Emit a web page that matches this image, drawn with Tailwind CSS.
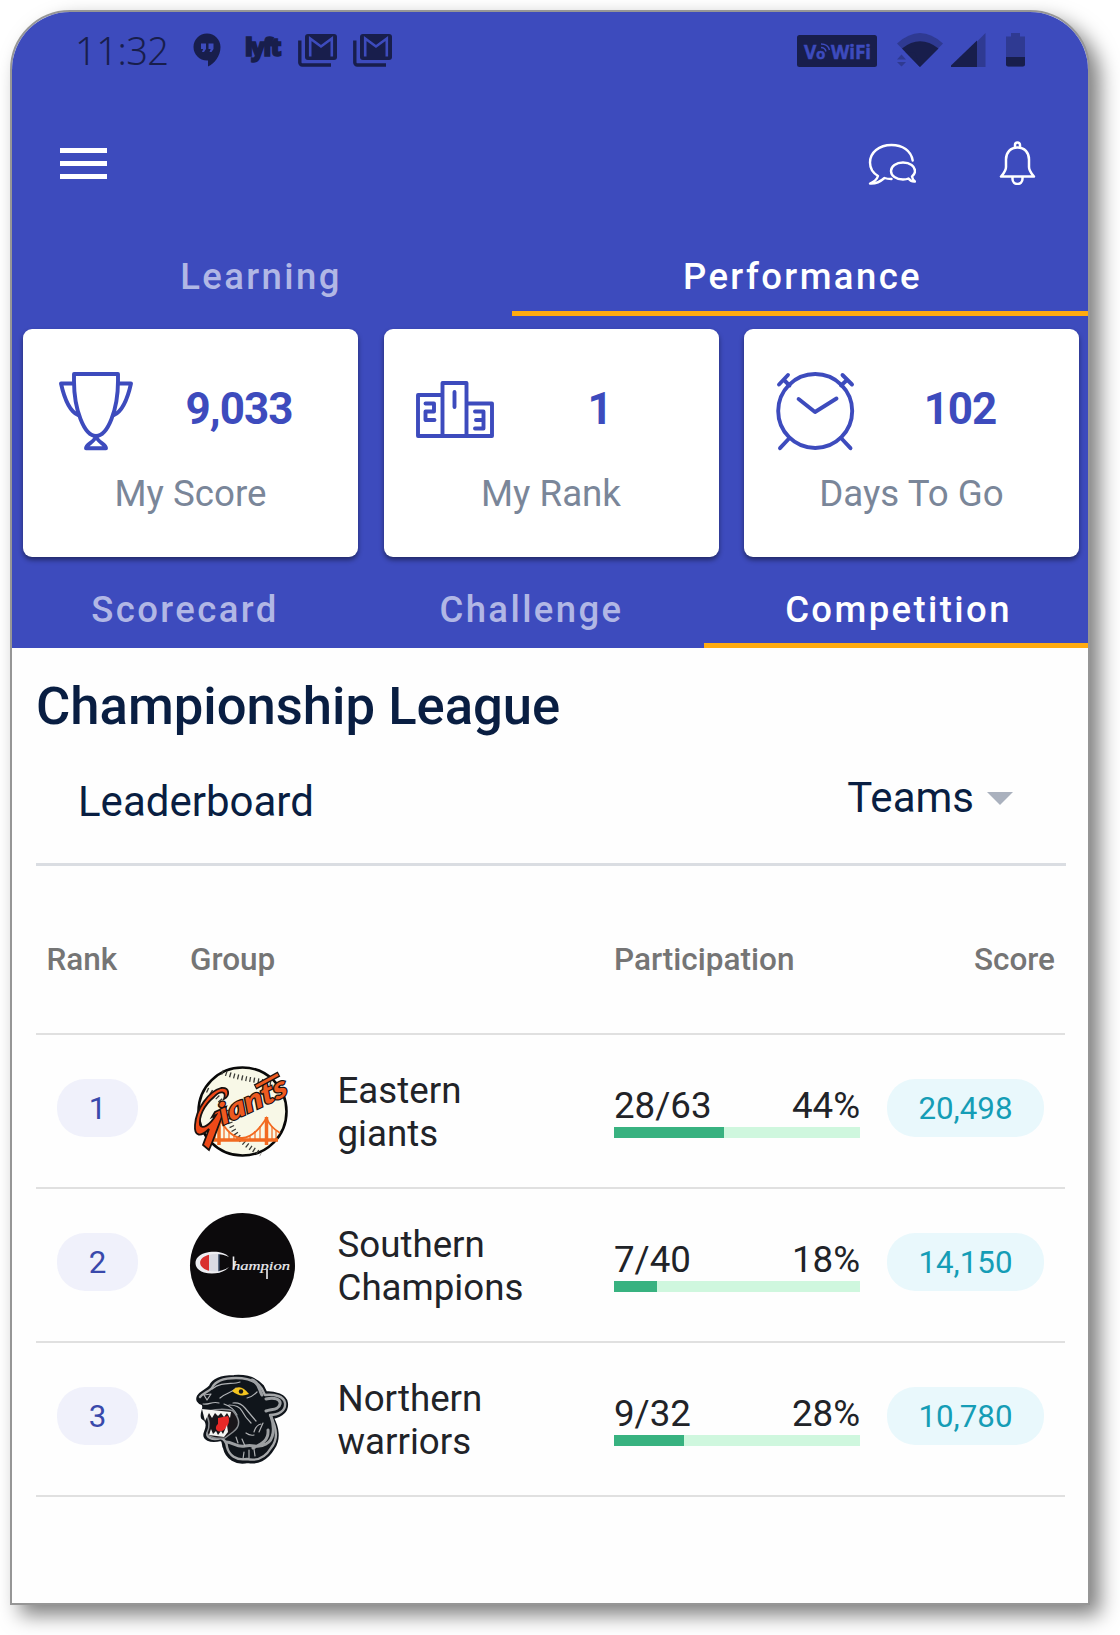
<!DOCTYPE html>
<html lang="en">
<head>
<meta charset="utf-8">
<title>Championship League</title>
<script src="https://cdn.jsdelivr.net/npm/@tailwindcss/browser@4"></script>
</head>
<body class="bg-white h-[1635px] overflow-hidden font-['Roboto',sans-serif]">
<div class="ml-[10px] mt-[10px] w-[1080px] h-[1595px] overflow-hidden rounded-t-[60px] border-2 border-[#969696] bg-[#fefefe] shadow-[10px_10px_20px_rgba(0,0,0,0.5)]">

  <header class="bg-[#3d4bbd] h-[636px]">
    <!-- Status bar -->
    <div class="flex h-[76px] items-center pl-[63px] pr-[63px] text-[#181e4c]">
      <div class="w-[118px] whitespace-nowrap font-['Noto_Sans'] text-[38px] font-light leading-[40px] tracking-[-0.500px]">11:32</div>
      <svg class="h-[34px] w-[28px]" viewBox="0 0 28 34" fill="none"><path d="M14 .5C6.500.5.5 6.500.5 14s6 13.500 13.500 13.500h1V33.500C21.500 30.500 27.500 23 27.500 14 27.500 6.500 21.500.5 14 .5Z" fill="currentColor"/><path d="M8 10.500h5v5.500l-2 3H9l1.200-3H8zM15.500 10.500h5v5.500l-2 3h-2l1.200-3h-2.200z" fill="#3d4bbd"/></svg>
      <div class="ml-[24px] mt-[-7px] w-[37px] whitespace-nowrap font-['Open_Sans'] text-[24px] font-extrabold leading-[30px] tracking-[-2.300px] [-webkit-text-stroke:1.500px_#181e4c]">lyft</div>
      <svg class="ml-[16px] h-[34px] w-[39px]" viewBox="0 0 39 34" fill="none"><path d="M1.800 7.500V29.500a2.500 2.500 0 0 0 2.500 2.500H33" stroke="currentColor" stroke-width="3.400"/><rect x="7" y="1" width="32" height="26" rx="3" fill="currentColor"/><path d="M12.200 23.500V5.500L23 13.500 33.800 5.500V23.500" stroke="#3d4bbd" stroke-width="2.600"/></svg>
      <svg class="ml-[16px] h-[34px] w-[39px]" viewBox="0 0 39 34" fill="none"><path d="M1.800 7.500V29.500a2.500 2.500 0 0 0 2.500 2.500H33" stroke="currentColor" stroke-width="3.400"/><rect x="7" y="1" width="32" height="26" rx="3" fill="currentColor"/><path d="M12.200 23.500V5.500L23 13.500 33.800 5.500V23.500" stroke="#3d4bbd" stroke-width="2.600"/></svg>
      <svg class="ml-auto h-[34px] w-[80px]" viewBox="0 0 80 34"><rect y="2" width="80" height="32" rx="2.500" fill="currentColor"/><g fill="#3d4bbd" stroke="#3d4bbd" stroke-width=".5" font-family="Noto Sans" font-weight="700"><text x="7" y="25.500" font-size="19">V</text><text x="19" y="25.500" font-size="15">o</text><text x="34" y="25.500" font-size="19" textLength="40" lengthAdjust="spacingAndGlyphs">WiFi</text></g><path d="M24 14.500q4 0 5 4M24 11q7 0 8.500 6" fill="none" stroke="#3d4bbd" stroke-width="1.500"/></svg>
      <svg class="ml-[20px] h-[34px] w-[46px]" viewBox="0 0 46 34"><path d="M0 10.500Q23-10.500 46 10.500L23 34Z" fill="#2f3a92"/><path d="M5 15.500Q23 1 41.500 15.500L23 34Z" fill="currentColor"/><path d="M-1 19.500V34H16L8 19.500Z" fill="#3d4bbd"/><path d="M0 26.500 4.500 21.500 9 26.500ZM0 29 4.500 33.500 9 29Z" fill="#2f3a92"/><path d="M8.500 19 23 34 18 20Z" fill="currentColor"/></svg>
      <svg class="ml-[8px] h-[34px] w-[35px]" viewBox="0 0 35 34"><path d="M34.500 0V34H1Z" fill="#2f3a92"/><path d="M26 7.500V34H0V32.500Z" fill="currentColor"/></svg>
      <svg class="ml-[20px] h-[34px] w-[19px]" viewBox="0 0 19 34"><path d="M5 0h9v3.500h5V30.500a3 3 0 0 1-3 3H3a3 3 0 0 1-3-3V3.500h5Z" fill="#2f3a92"/><path d="M0 24H19V31.500a2 2 0 0 1-2 2H2a2 2 0 0 1-2-2Z" fill="currentColor"/></svg>
    </div>

    <!-- App bar -->
    <div class="flex h-[149px] items-center pl-[48px] pr-[52px] text-white">
      <div class="mt-[2px] flex w-[47px] flex-col gap-[7.500px]">
        <div class="h-[5.500px] bg-white"></div><div class="h-[5.500px] bg-white"></div><div class="h-[5.500px] bg-white"></div>
      </div>
      <svg class="ml-auto mt-[2px] h-[44px] w-[48px]" viewBox="0 0 48 44" fill="none" stroke="currentColor" stroke-width="2.400" stroke-linecap="round" stroke-linejoin="round"><path d="M44.700 18.500C43 8.500 34.500 3 23.500 3 11 3 2 10.500 2 20.500c0 5.500 3 10.500 8 13.500C9 37.500 5.500 40 2 41.500c5.500.5 11-2.500 14.500-5.500 2 .8 4.500 1 7 1"/><path d="M35 20.500C28 20.500 23 24.200 23 29s5 8.500 12 8.500c2 0 4-.3 5.500-1C42 38.500 44.500 39.700 47 39.500c-1.500-1-2.500-2.500-3-5C46 33 47 31 47 29c0-4.800-5-8.500-12-8.500Z"/></svg>
      <svg class="ml-[83px] h-[44px] w-[37px]" viewBox="0 0 37 44" fill="none" stroke="currentColor" stroke-width="2.500" stroke-linejoin="round"><path d="M18.500 6.500C11.500 6.500 7 11.500 7 18.500V26c0 4-2 6-5 9.500H35C32 32 30 30 30 26V18.500C30 11.500 25.500 6.500 18.500 6.500Z"/><path d="M16 6.500V4a2.500 2.500 0 0 1 5 0V6.500M13.500 35.500V38a5 5 0 0 0 10 0V35.500"/></svg>
    </div>

    <!-- Main tabs -->
    <nav class="flex h-[79px] text-[36.500px] font-medium tracking-[2.400px]">
      <div class="flex w-[500px] items-center justify-center pr-[2px] pt-[2px] text-[#b1b7e5]">Learning</div>
      <div class="relative flex flex-1 items-center justify-center pl-[5px] pt-[2px] text-white">Performance
        <div class="absolute inset-x-0 bottom-0 h-[5.400px] bg-[#ffab10]"></div>
      </div>
    </nav>

    <!-- Summary cards -->
    <div class="grid grid-cols-3 gap-[25.500px] pl-[11px] pr-[9px] pt-[13px]">
      <div class="h-[228px] rounded-[9px] bg-white pt-[42px] shadow-[0_3px_5px_rgba(0,0,0,0.45)]">
        <div class="flex h-[80px] items-center pl-[31px] pr-[14px]">
          <svg class="size-[80px] shrink-0" viewBox="0 0 80 80" fill="none" stroke="#3d4bbd" stroke-width="3.900" stroke-linecap="round" stroke-linejoin="round"><path d="M20 3H64V10C64 38 54 65 42 65S20 38 20 10Z"/><path d="M20 12.500H7C10 26 15 40 24 44M64 12.500H77C74 26 69 40 60 44"/><path d="M42 65C41 71 32 73 32 77.200H52C52 73 43 71 42 65Z"/></svg>
          <div class="flex-1 pb-[4px] text-center text-[44px] font-bold leading-[50px] tracking-[-1px] text-[#3d4bbd]">9,033</div>
        </div>
        <div class="mt-[20px] text-center text-[36.700px] leading-[46px] text-[#7a8699]">My Score</div>
      </div>
      <div class="h-[228px] rounded-[9px] bg-white pt-[42px] shadow-[0_3px_5px_rgba(0,0,0,0.45)]">
        <div class="flex h-[80px] items-center pl-[31px] pr-[14px]">
          <svg class="size-[80px] shrink-0" viewBox="0 0 80 80" fill="none" stroke="#3d4bbd" stroke-width="3.900" stroke-linecap="round" stroke-linejoin="round"><path d="M3 24H27.500V12H51.500V32.500H77V65H3ZM27.500 24V65M51.500 32V65"/><path d="M10.500 32.500H19V40.500H10.500V49H19.500M39.500 21V36M60 40.500H68.500V57.500H60M61 49H68.500"/></svg>
          <div class="flex-1 pb-[4px] text-center text-[44px] font-bold leading-[50px] tracking-[-1px] text-[#3d4bbd]">1</div>
        </div>
        <div class="mt-[20px] text-center text-[36.700px] leading-[46px] text-[#7a8699]">My Rank</div>
      </div>
      <div class="h-[228px] rounded-[9px] bg-white pt-[42px] shadow-[0_3px_5px_rgba(0,0,0,0.45)]">
        <div class="flex h-[80px] items-center pl-[31px] pr-[14px]">
          <svg class="size-[80px] shrink-0" viewBox="0 0 80 80" fill="none" stroke="#3d4bbd" stroke-width="3.900" stroke-linecap="round" stroke-linejoin="round"><circle cx="40.200" cy="40" r="37"/><path d="M23.600 28 40 41 61.500 27.500M4 13.500 13 4M9 9 14.500 14.500M67.500 4 77 13.500M72 9 66 14.500M14.500 67 5 77.200M66 67 75.500 77.200"/></svg>
          <div class="flex-1 pb-[4px] text-center text-[44px] font-bold leading-[50px] tracking-[-1px] text-[#3d4bbd]">102</div>
        </div>
        <div class="mt-[20px] text-center text-[36.700px] leading-[46px] text-[#7a8699]">Days To Go</div>
      </div>
    </div>

    <!-- Secondary tabs -->
    <nav class="mt-[14px] flex h-[77px] text-[36.500px] font-medium tracking-[2.400px] text-[#b1b7e5]">
      <div class="flex w-[346px] items-center justify-center pt-[2px]">Scorecard</div>
      <div class="flex w-[346px] items-center justify-center pl-[1px] pt-[2px]">Challenge</div>
      <div class="relative flex flex-1 items-center justify-center pl-[5px] pt-[2px] text-white">Competition
        <div class="absolute inset-x-0 bottom-0 h-[5.400px] bg-[#ffab10]"></div>
      </div>
    </nav>
  </header>

  <main class="pl-[24px] text-[#091e42]">
    <h1 class="pt-[28px] text-[52.600px] font-medium leading-[60px]">Championship League</h1>
    <div class="flex h-[130px] w-[1030px] items-start justify-between border-b-[3px] border-[#dadde2] pl-[42px] pr-[53px] text-[42px] leading-[50px]">
      <div class="pt-[41px]">Leaderboard</div>
      <div class="flex items-center gap-[13px] pt-[37px]">Teams
        <svg class="h-[13px] w-[26px]" viewBox="0 0 26 13"><path d="M0 0H26L13 13Z" fill="#aab1be"/></svg>
      </div>
    </div>

    <!-- Leaderboard table -->
    <div class="w-[1029px] text-[36.700px] text-[#212328]">
      <div class="grid h-[169px] grid-cols-[154px_424px_273px_1fr] border-b-2 border-[#e0e0e0] pt-[74px] text-[31.500px] font-medium leading-[40px] text-[#757575]">
        <div class="pl-[10.500px]">Rank</div><div>Group</div><div>Participation</div><div class="pr-[10px] text-right">Score</div>
      </div>

      <div class="grid h-[154px] grid-cols-[154px_147.500px_276.500px_246px_1fr] border-b-2 border-[#e0e0e0]">
        <div class="pl-[21px] pt-[44px]"><div class="h-[58px] w-[81px] rounded-[28px] bg-[#f0f1fb] text-center text-[31.300px] leading-[59px] text-[#3949ab]">1</div></div>
        <svg class="mt-[24px] size-[105px] overflow-visible" viewBox="0 0 105 105">
          <circle cx="52.500" cy="52.500" r="44" fill="#f8f8e7" stroke="#080808" stroke-width="2.600"/>
          <path d="M32 13Q50 20 84 24M17 31Q33 38 39 60T71 95" fill="none" stroke="#3a3a36" stroke-width="5" stroke-dasharray="1.300 2.800"/>
          <g fill="none" stroke="#f26a21"><path d="M23 81H88" stroke-width="3.500"/><path d="M29 58V86M76.500 58V86" stroke-width="3.500"/><path d="M29 59Q40 79 52 79T76.500 59Q80 68 90 74" stroke-width="1.800"/><path d="M34 66V81M39 73V81M44 77V81M60 77V81M65 72V81M70 67V81M82 67V81M86 72V81M25 66V81" stroke-width="1.200"/></g>
          <path d="M34 40C37 32 30 31 24 38C13 47 9 58 10 66C12 71 20 66 26 56L22 58 25 53 36 48C29 64 26 75 19 91L13 86 19 70C11 78 4 78 5 66C6 50 19 32 31 29C40 28 40 37 34 40Z" fill="#ee4918" stroke="#1a1210" stroke-width="1.800"/>
          <text transform="translate(33 66) rotate(-25) skewX(-6)" font-family="Lato" font-size="29" font-weight="900" font-style="italic" textLength="73" lengthAdjust="spacingAndGlyphs" fill="#ee5a20" stroke="#1a1210" stroke-width="2.400" paint-order="stroke">iants</text>
          <path d="M65 28 89 15" stroke="#1a1210" stroke-width="5.500"/><path d="M66 27.500 88 15.500" stroke="#ee5a20" stroke-width="3"/>
        </svg>
        <div class="pt-[34px] leading-[43px]">Eastern<br>giants</div>
        <div class="pt-[49px]">
          <div class="flex h-[43px] justify-between leading-[43px]"><span>28/63</span><span>44%</span></div>
          <div class="h-[11px] bg-[#cff7de]"><div class="h-full bg-[#38b280]" style="width:44.700%"></div></div>
        </div>
        <div class="pl-[27px] pt-[44px]"><div class="h-[58px] w-[157px] rounded-[28px] bg-[#e9f8fc] text-center text-[31.300px] leading-[59px] text-[#159db6]">20,498</div></div>
      </div>

      <div class="grid h-[154px] grid-cols-[154px_147.500px_276.500px_246px_1fr] border-b-2 border-[#e0e0e0]">
        <div class="pl-[21px] pt-[44px]"><div class="h-[58px] w-[81px] rounded-[28px] bg-[#f0f1fb] text-center text-[31.300px] leading-[59px] text-[#3949ab]">2</div></div>
        <svg class="mt-[24px] size-[105px] overflow-visible" viewBox="0 0 105 105">
          <circle cx="52.500" cy="52.500" r="52.500" fill="#0c0a0c"/>
          <path d="M19 41V59C12 58 9 54 9 50S12 42 19 41Z" fill="#d9302f"/><path d="M19 40.500H29V60H19Z" fill="#d9dae3"/><path d="M29 41V60" stroke="#344964" stroke-width="1.500"/>
          <path d="M39 44C34 38 22 38 15 40C2 44 3 56 14 59.500C23 62 34 60 39 54C33 58 25 60 18 57.500C7 54 8 45 18 42C26 40 33 41 39 44Z" fill="#eeeef2"/>
          <text x="42" y="57" font-family="Liberation Serif" font-size="13" font-style="italic" textLength="58" lengthAdjust="spacingAndGlyphs" fill="#eeeef2" stroke="#eeeef2" stroke-width=".2">hampion</text>
          <path d="M77 56V66M43.500 43.500V56" stroke="#eeeef2" stroke-width="1.600"/>
        </svg>
        <div class="pt-[34px] leading-[43px]">Southern<br>Champions</div>
        <div class="pt-[49px]">
          <div class="flex h-[43px] justify-between leading-[43px]"><span>7/40</span><span>18%</span></div>
          <div class="h-[11px] bg-[#cff7de]"><div class="h-full bg-[#38b280]" style="width:17.600%"></div></div>
        </div>
        <div class="pl-[27px] pt-[44px]"><div class="h-[58px] w-[157px] rounded-[28px] bg-[#e9f8fc] text-center text-[31.300px] leading-[59px] text-[#159db6]">14,150</div></div>
      </div>

      <div class="grid h-[154px] grid-cols-[154px_147.500px_276.500px_246px_1fr] border-b-2 border-[#e0e0e0]">
        <div class="pl-[21px] pt-[44px]"><div class="h-[58px] w-[81px] rounded-[28px] bg-[#f0f1fb] text-center text-[31.300px] leading-[59px] text-[#3949ab]">3</div></div>
        <svg class="mt-[24px] size-[105px]" viewBox="0 0 105 105" fill="none" stroke-linejoin="round" stroke-linecap="round">
          <path d="M8 29C11 24 17 23 20 19C23 12 33 9 44 9C56 8 66 11 73 19L76 25C85 25 96 28 97 36C98 45 91 49 83 51C88 60 90 72 84 81C77 93 67 97 58 95C46 98 36 91 34 81C32 78 34 75 31 73C20 76 12 72 15 65C18 58 16 53 12 51C10 45 16 40 12 37C8 36 6 33 8 29Z" fill="#10151b" stroke="#10151b" stroke-width="2"/>
          <path d="M10 30C13 26 18 25 22 21C26 12 37 11 46 11C58 11 67 14 72 22L75 28C84 27 94 29 95 36C96 44 88 48 80 48C87 61 88 73 81 81C75 91 66 94 57 92C46 94 39 88 37 80C37 76 34 72 31 71C22 74 15 70 18 65" stroke="#a6a8aa" stroke-width="2.400"/>
          <path d="M81 49C85 61 84 73 76 77C68 82 64 77 55 79C47 81 43 75 36 75M63 81C71 77 79 74 78 63M62 13C70 16 69 24 72 28M76 32C84 30 91 32 90 37C89 43 82 42 76 44" stroke="#9c9fa2" stroke-width="3"/>
          <path d="M22 22C32 14 42 18 50 15M30 31C37 25 42 26 46 21M13 37C19 38 22 34 29 36M14 28L21 27 17 33ZM43 36Q50 35 55 41T66 54M39 38Q49 38 52 44T61 56M34 37Q43 40 47 48M57 31Q62 30 67 25M64 65Q66 58 71 57M69 65L73 56M56 66Q60 69 64 68M52 72L55 79M46 70L48 76M54 85L53 92M59 83V91M64 82L65 89" stroke="#b0b2b5" stroke-width="1.200"/>
          <path d="M15 46C22 41 39 42 43 44C50 52 51 59 43 65L35 71C28 72 19 71 17 66C20 60 20 52 15 46Z" fill="#19161a" stroke="#898c90" stroke-width="1.500"/>
          <path d="M28 51 38 49C41 54 37 62 32 64C26 66 24 60 28 57Z" fill="#e82827"/>
          <path d="M12 42L41 45 40 51 37 46 34 50 31 46 28 49 25 46 22 51 19 46 15 54ZM19 68L21 62 23 67 26 64 28 68 31 64 33 67 37 58 38 65 34 70Z" fill="#f5f5f3"/>
          <path d="M42 24Q50 15 59 27Q50 31 42 24Z" fill="#f5c51f"/><circle cx="51" cy="24.500" r="2.200" fill="#171717"/>
        </svg>
        <div class="pt-[34px] leading-[43px]">Northern<br>warriors</div>
        <div class="pt-[49px]">
          <div class="flex h-[43px] justify-between leading-[43px]"><span>9/32</span><span>28%</span></div>
          <div class="h-[11px] bg-[#cff7de]"><div class="h-full bg-[#38b280]" style="width:28.300%"></div></div>
        </div>
        <div class="pl-[27px] pt-[44px]"><div class="h-[58px] w-[157px] rounded-[28px] bg-[#e9f8fc] text-center text-[31.300px] leading-[59px] text-[#159db6]">10,780</div></div>
      </div>
    </div>
  </main>
</div>
</body>
</html>
